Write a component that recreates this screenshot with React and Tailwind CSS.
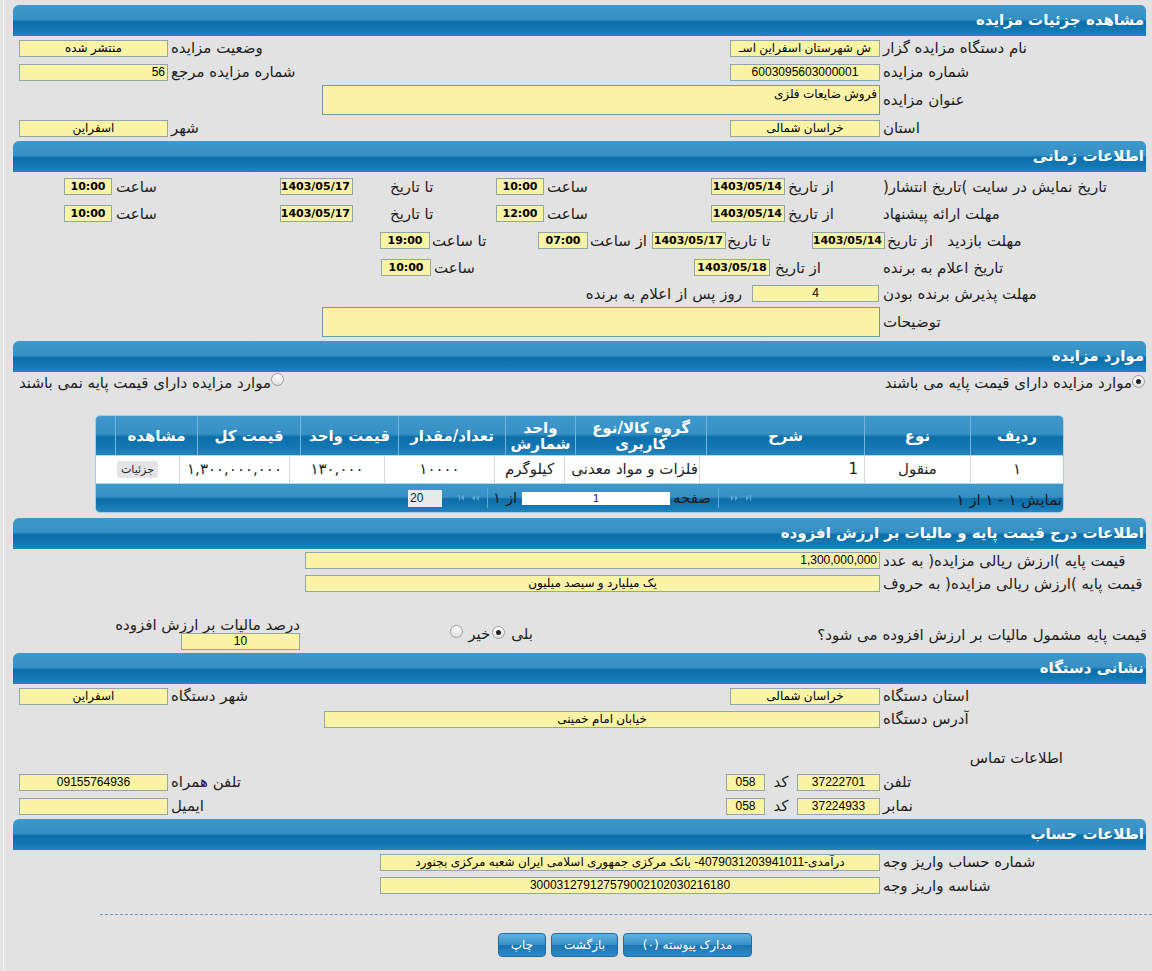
import React from "react";

const FONT = "font-['DejaVu_Sans',sans-serif]";
const LBL = "shrink-0 text-left text-[15px] leading-[20px] text-[#1e1e1e] whitespace-nowrap";

function Bar({ children }) {
  return (
    <div className="ml-[13px] mr-[5px] h-[31px] shrink-0 rounded-t-[6px] border-r border-[#cfe3f1] bg-[linear-gradient(to_bottom,#3f98ca_0%,#3690c5_46%,#0c6ea8_54%,#1479b3_82%,#2585be_100%)] flex items-center pr-[2px] text-[15px] font-bold text-white">
      {children}
    </div>
  );
}

// yellow read-only field
function Box({ className = "", children, kind = "text" }) {
  const font =
    kind === "date"
      ? "font-['DejaVu_Sans',sans-serif] font-bold text-[11px] text-center"
      : kind === "num"
      ? "font-['Liberation_Sans','DejaVu_Sans',sans-serif] text-[12px] text-right"
      : "font-['Liberation_Sans','DejaVu_Sans',sans-serif] text-[12px] text-center";
  return (
    <div
      className={`h-[17px] shrink-0 overflow-hidden whitespace-nowrap border border-[#8fa8a6] bg-[#faf3a6] px-[2px] leading-[15px] text-black ${font} ${className}`}
    >
      {children}
    </div>
  );
}

function Radio({ checked, className = "" }) {
  return (
    <span
      className={`inline-flex h-[13px] w-[13px] shrink-0 items-center justify-center rounded-full border border-[#9c9c9c] bg-[linear-gradient(to_bottom,#ffffff,#dedede)] ${className}`}
    >
      {checked && <span className="h-[5px] w-[5px] rounded-full bg-[#222]" />}
    </span>
  );
}

function Btn({ className = "", children }) {
  return (
    <div
      className={`flex h-[24px] items-center justify-center rounded-[4px] border border-[#1d6ea6] bg-[linear-gradient(to_bottom,#62b2e0_0%,#3891cb_48%,#1a74b0_52%,#2f8bc7_100%)] text-[12px] text-white ${className}`}
    >
      {children}
    </div>
  );
}

function PagerIcons({ dir }) {
  // faded first/prev or next/last glyphs
  return (
    <svg width="26" height="8" viewBox="0 0 26 8" className="opacity-60">
      {dir === "next" ? (
        <g fill="#7fc0e6">
          <path d="M1 1 L4 4 L1 7 Z M5 1 L8 4 L5 7 Z" />
          <path d="M16 1 L19 4 L16 7 Z" />
          <rect x="20" y="1" width="1.2" height="6" />
        </g>
      ) : (
        <g fill="#7fc0e6">
          <rect x="4.8" y="1" width="1.2" height="6" />
          <path d="M10 1 L7 4 L10 7 Z" />
          <path d="M21 1 L18 4 L21 7 Z M25 1 L22 4 L25 7 Z" />
        </g>
      )}
    </svg>
  );
}

const headCols = [
  ["w-[93px]", "ردیف"],
  ["w-[106px]", "نوع"],
  ["w-[158px]", "شرح"],
  ["w-[131px]", "گروه کالا/نوع کاربری"],
  ["w-[70px]", "واحد شمارش"],
  ["w-[107px]", "تعداد/مقدار"],
  ["w-[98px]", "قیمت واحد"],
  ["w-[103px]", "قیمت کل"],
  ["w-[82px]", "مشاهده"],
  ["flex-1", ""],
];

export default function App() {
  return (
    <div
      dir="rtl"
      className={`min-h-screen w-full bg-[#e2e2e2] pb-[12px] text-[#1e1e1e] shadow-[inset_3px_0_0_#e2e2e2,inset_4px_0_0_#f6f6f6] ${FONT}`}
    >
      {/* ---- مشاهده جزئیات مزایده ---- */}
      <div className="h-[5px]" />
      <Bar>مشاهده جزئیات مزایده</Bar>
      <div className="flex h-[24px] items-center">
        <div className={`w-[272px] pl-[3px] ${LBL}`}>نام دستگاه مزایده گزار</div>
        <Box className="w-[150px]">ش شهرستان اسفراین اسـ</Box>
        <div className={`w-[562px] pl-[3px] ${LBL}`}>وضعیت مزایده</div>
        <Box className="w-[149px]">منتشر شده</Box>
      </div>
      <div className="flex h-[24px] items-center">
        <div className={`w-[272px] pl-[3px] ${LBL}`}>شماره مزایده</div>
        <Box className="w-[150px]">6003095603000001</Box>
        <div className={`w-[562px] pl-[3px] ${LBL}`}>شماره مزایده مرجع</div>
        <Box className="w-[149px]" kind="num">56</Box>
      </div>
      <div className="flex h-[32px] items-center">
        <div className={`w-[272px] pl-[3px] ${LBL}`}>عنوان مزایده</div>
        <div className="h-[30px] w-[558px] shrink-0 border border-[#6f9aa0] bg-[#faf3a6] pr-[2px] pt-[1px] text-right font-['Liberation_Sans','DejaVu_Sans',sans-serif] text-[12px] leading-[14px] text-black">
          فروش ضایعات فلزی
        </div>
      </div>
      <div className="flex h-[24px] items-center">
        <div className={`w-[272px] pl-[3px] ${LBL}`}>استان</div>
        <Box className="w-[150px]">خراسان شمالی</Box>
        <div className={`w-[562px] pl-[3px] ${LBL}`}>شهر</div>
        <Box className="w-[149px]">اسفراین</Box>
      </div>

      {/* ---- اطلاعات زمانی ---- */}
      <div className="h-[1px]" />
      <Bar>اطلاعات زمانی</Bar>
      <div className="h-[1px]" />
      {[
        ["تاریخ نمایش در سایت )تاریخ انتشار(", "10:00"],
        ["مهلت ارائه پیشنهاد", "12:00"],
      ].map(([label, t]) => (
        <div key={label} className="flex h-[27px] items-center">
          <div className={`w-[272px] pl-[3px] ${LBL}`}>{label}</div>
          <div className={`w-[95px] pl-[3px] ${LBL}`}>از تاریخ</div>
          <Box className="w-[74px]" kind="date">1403/05/14</Box>
          <div className={`w-[167px] pl-[3px] ${LBL}`}>ساعت</div>
          <Box className="w-[48px]" kind="date">{t}</Box>
          <div className={`w-[143px] pl-[37px] ${LBL}`}>تا تاریخ</div>
          <Box className="w-[73px]" kind="date">1403/05/17</Box>
          <div className={`w-[168px] pl-[4px] ${LBL}`}>ساعت</div>
          <Box className="w-[48px]" kind="date">10:00</Box>
        </div>
      ))}
      <div className="flex h-[27px] items-center">
        <div className={`w-[267px] pl-[2px] ${LBL}`}>مهلت بازدید&nbsp;&nbsp; از تاریخ</div>
        <Box className="w-[73px]" kind="date">1403/05/14</Box>
        <div className={`w-[86px] pl-[1px] ${LBL}`}>تا تاریخ</div>
        <Box className="w-[74px]" kind="date">1403/05/17</Box>
        <div className={`w-[64px] pl-[2px] ${LBL}`}>از ساعت</div>
        <Box className="w-[50px]" kind="date">07:00</Box>
        <div className={`w-[108px] pl-[2px] ${LBL}`}>تا ساعت</div>
        <Box className="w-[50px]" kind="date">19:00</Box>
      </div>
      <div className="flex h-[27px] items-center">
        <div className={`w-[272px] pl-[3px] ${LBL}`}>تاریخ اعلام به برنده</div>
        <div className={`w-[110px] pl-[5px] ${LBL}`}>از تاریخ</div>
        <Box className="w-[76px]" kind="date">1403/05/18</Box>
        <div className={`w-[263px] pl-[3px] ${LBL}`}>ساعت</div>
        <Box className="w-[50px]" kind="date">10:00</Box>
      </div>
      <div className="flex h-[25px] items-center">
        <div className={`w-[273px] pl-[4px] ${LBL}`}>مهلت پذیرش برنده بودن</div>
        <Box className="w-[127px] border-[#5d8fa8]">4</Box>
        <div className={`mr-[10px] ${LBL}`}>روز پس از اعلام به برنده</div>
      </div>
      <div className="flex h-[32px] items-center">
        <div className={`w-[272px] pl-[3px] ${LBL}`}>توضیحات</div>
        <div className="h-[30px] w-[558px] shrink-0 border border-[#6f9aa0] bg-[#faf3a6]" />
      </div>

      {/* ---- موارد مزایده ---- */}
      <div className="h-[3px]" />
      <Bar>موارد مزایده</Bar>
      <div className="flex h-[22px] items-center justify-between pl-[19px] pr-[7px]">
        <div className="flex items-center">
          <Radio checked className="-mt-[3px]" />
          <span className="text-[15px] leading-[20px]">موارد مزایده دارای قیمت پایه می باشند</span>
        </div>
        <div className="flex items-center">
          <Radio className="-mt-[7px]" />
          <span className="text-[15px] leading-[20px]">موارد مزایده دارای قیمت پایه نمی باشند</span>
        </div>
      </div>

      {/* table */}
      <div className="mr-[88px] mt-[21px] w-[969px] overflow-hidden rounded-[5px] border border-[#a9cbe3]">
        <div className="flex h-[39px] bg-[linear-gradient(to_bottom,#3f98ca_0%,#3690c5_46%,#0c6ea8_54%,#1479b3_82%,#2585be_100%)]">
          {headCols.map(([w, t], i) => (
            <div
              key={i}
              className={`${w} flex shrink-0 items-center justify-center px-[2px] text-center text-[15px] font-bold leading-[16px] text-white ${
                i < headCols.length - 1 ? "border-l border-[#75b4dc]" : ""
              }`}
            >
              {t}
            </div>
          ))}
        </div>
        <div className="flex h-[29px] border-y border-[#b9d5ea] bg-white text-[15px]">
          <div className="flex w-[93px] shrink-0 items-center justify-center border-l border-[#d6d6d6]">۱</div>
          <div className="flex w-[106px] shrink-0 items-center justify-center border-l border-[#d6d6d6]">منقول</div>
          <div className="flex w-[165px] shrink-0 items-center justify-start border-l border-[#d6d6d6] pr-[6px]">1</div>
          <div className="flex w-[135px] shrink-0 items-center justify-start whitespace-nowrap border-l border-[#d6d6d6] pr-[1px]">فلزات و مواد معدنی</div>
          <div className="flex w-[70px] shrink-0 items-center justify-center border-l border-[#d6d6d6]">کیلوگرم</div>
          <div className="flex w-[110px] shrink-0 items-center justify-center border-l border-[#d6d6d6]">۱۰۰۰۰</div>
          <div className="flex w-[95px] shrink-0 items-center justify-center border-l border-[#d6d6d6]">۱۳۰,۰۰۰</div>
          <div className="flex w-[110px] shrink-0 items-center justify-center border-l border-[#d6d6d6]">۱,۳۰۰,۰۰۰,۰۰۰</div>
          <div className="flex flex-1 items-center justify-center">
            <span className="rounded-[2px] bg-[#e4e4e4] px-[4px] text-[11px] leading-[17px]">جزئیات</span>
          </div>
        </div>
        <div className="flex h-[28px] items-center bg-[linear-gradient(to_bottom,#3f98ca_0%,#3690c5_46%,#0c6ea8_54%,#1479b3_82%,#2585be_100%)] text-[15px] text-[#1c1c1c]">
          <div className="flex h-full w-[300px] shrink-0 items-end pb-[1px] pr-[1px]">نمایش ۱ - ۱ از ۱</div>
          <div className="flex w-[40px] shrink-0 items-center justify-center">
            <PagerIcons dir="next" />
          </div>
          <div className="mx-[4px] h-[20px] w-[1px] shrink-0 bg-[#5ba7d6]" />
          <div className="w-[44px] shrink-0 text-center">صفحه</div>
          <div className="h-[13px] w-[148px] shrink-0 bg-white text-center font-['Liberation_Sans',sans-serif] text-[11px] leading-[13px]">1</div>
          <div className="w-[34px] shrink-0 text-center">از ۱</div>
          <div className="h-[20px] w-[1px] shrink-0 bg-[#5ba7d6]" />
          <div className="flex w-[40px] shrink-0 items-center justify-center">
            <PagerIcons dir="prev" />
          </div>
          <div className="mr-[5px] h-[17px] w-[34px] shrink-0 bg-[#e9e9e9] pl-[2px] text-left font-['Liberation_Sans',sans-serif] text-[12px] leading-[17px]">20</div>
        </div>
      </div>

      {/* ---- قیمت پایه ---- */}
      <div className="h-[5px]" />
      <Bar>اطلاعات درج قیمت پایه و مالیات بر ارزش افزوده</Bar>
      <div className="flex h-[23px] items-center">
        <div className={`w-[272px] pl-[3px] ${LBL}`}>&nbsp;&nbsp;قیمت پایه )ارزش ریالی مزایده( به عدد</div>
        <Box className="w-[575px]" kind="num">1,300,000,000</Box>
      </div>
      <div className="flex h-[23px] items-center">
        <div className={`w-[272px] pl-[3px] ${LBL}`}>قیمت پایه )ارزش ریالی مزایده( به حروف</div>
        <Box className="w-[575px]">یک میلیارد و سیصد میلیون</Box>
      </div>
      <div className="mt-[20px] flex h-[36px] items-center">
        <div className={`w-[619px] pr-[5px] pt-[4px] text-right ${LBL}`}>قیمت پایه مشمول مالیات بر ارزش افزوده می شود؟</div>
        <div className="flex w-[88px] shrink-0 items-center pt-[2px]">
          <span className="text-[15px] leading-[20px]">بلی</span>
          <Radio checked className="mr-[6px] -mt-[3px]" />
          <span className="mr-[2px] text-[15px] leading-[20px]">خیر</span>
          <Radio className="mr-[5px] -mt-[5px]" />
        </div>
        <div className="w-[145px] shrink-0" />
        <div className="flex flex-col items-start">
          <span className="whitespace-nowrap text-[15px] leading-[16px]">درصد مالیات بر ارزش افزوده</span>
          <Box className="w-[119px]">10</Box>
        </div>
      </div>

      {/* ---- نشانی دستگاه ---- */}
      <div className="h-[2px]" />
      <Bar>نشانی دستگاه</Bar>
      <div className="flex h-[24px] items-center">
        <div className={`w-[272px] pl-[3px] ${LBL}`}>استان دستگاه</div>
        <Box className="w-[150px]">خراسان شمالی</Box>
        <div className={`w-[562px] pl-[3px] ${LBL}`}>شهر دستگاه</div>
        <Box className="w-[149px]">اسفراین</Box>
      </div>
      <div className="flex h-[22px] items-center">
        <div className={`w-[272px] pl-[3px] ${LBL}`}>آدرس دستگاه</div>
        <Box className="w-[556px]">خیابان امام خمینی</Box>
      </div>
      <div className="mt-[16px] flex h-[24px] items-center pr-[89px] text-[15px]">اطلاعات تماس</div>
      {[
        ["تلفن", "37222701", "تلفن همراه", "09155764936"],
        ["نمابر", "37224933", "ایمیل", ""],
      ].map(([a, b, c, d]) => (
        <div key={a} className="flex h-[24px] items-center">
          <div className={`w-[272px] pl-[3px] ${LBL}`}>{a}</div>
          <Box className="w-[83px]">{b}</Box>
          <div className="w-[32px] shrink-0 text-center text-[15px]">کد</div>
          <Box className="w-[39px]">058</Box>
          <div className={`w-[558px] pl-[3px] ${LBL}`}>{c}</div>
          <Box className="w-[149px]">{d}</Box>
        </div>
      ))}

      {/* ---- اطلاعات حساب ---- */}
      <div className="h-[1px]" />
      <Bar>اطلاعات حساب</Bar>
      <div className="flex h-[24px] items-center">
        <div className={`w-[272px] pl-[3px] ${LBL}`}>شماره حساب واریز وجه</div>
        <Box className="w-[500px]">درآمدی-4079031203941011- بانک مرکزی جمهوری اسلامی ایران شعبه مرکزی بجنورد</Box>
      </div>
      <div className="flex h-[23px] items-center">
        <div className={`w-[272px] pl-[3px] ${LBL}`}>شناسه واریز وجه</div>
        <Box className="w-[500px]">300031279127579002102030216180</Box>
      </div>

      <div className="ml-[100px] mt-[17px] border-t border-dashed border-[#6f9bc8]" />

      <div className="mt-[18px] flex gap-[5px] pr-[400px]">
        <Btn className="w-[129px]">مدارک پیوسته (۰)</Btn>
        <Btn className="w-[67px]">بازگشت</Btn>
        <Btn className="w-[48px]">چاپ</Btn>
      </div>
    </div>
  );
}
